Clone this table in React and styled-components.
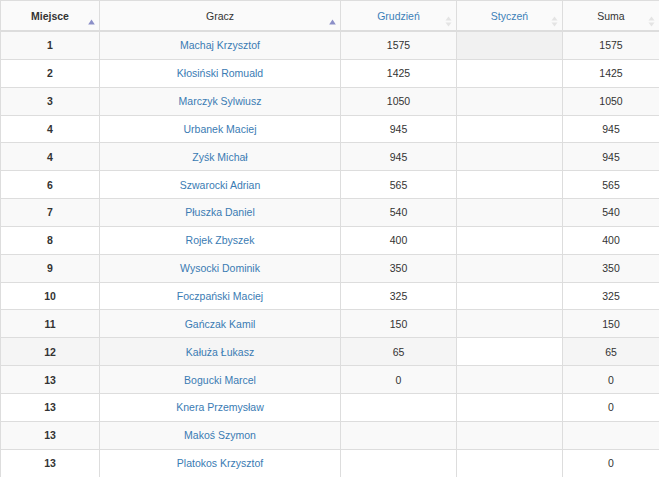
import styled, { createGlobalStyle } from "styled-components";

const GlobalStyle = createGlobalStyle`
  body {
    margin: 0;
    background: #ffffff;
    font-family: "Liberation Sans", Arial, sans-serif;
  }
`;

const Table = styled.table`
  width: 659px;
  border-collapse: collapse;
  table-layout: fixed;
  font-family: "Liberation Sans", Arial, sans-serif;
  font-size: 10.5px;
  color: #333333;
`;

const HeadCell = styled.th`
  position: relative;
  height: 28px;
  padding: 1px 8px 0;
  border: 1px solid #dddddd;
  border-bottom: 2px solid #dddddd;
  background: #fafafa;
  text-align: center;
  font-weight: ${(p) => (p.$bold ? "bold" : "normal")};
  color: ${(p) => (p.$link ? "#3c7fb8" : "#333333")};
`;

const SortIcon = styled.svg`
  position: absolute;
  right: ${(p) => p.$right}px;
  bottom: ${(p) => p.$bottom}px;
`;

const Cell = styled.td`
  height: 26.85px;
  padding: 0 8px;
  border: 1px solid #dddddd;
  text-align: center;
  font-weight: ${(p) => (p.$bold ? "bold" : "normal")};
  background: ${(p) => p.$bg};
`;

const PlayerLink = styled.a`
  color: #3a7bb3;
  text-decoration: none;
`;

function AscIcon() {
  return (
    <SortIcon $right={4} $bottom={5} width="7" height="6" viewBox="0 0 7 6">
      <path d="M3.5 0.5 L6.8 5.5 L0.2 5.5 Z" fill="#8b8fc8" />
    </SortIcon>
  );
}

function BothIcon() {
  return (
    <SortIcon $right={4} $bottom={3} width="7" height="11" viewBox="0 0 7 11">
      <path d="M3.5 0.5 L6.5 4.5 L0.5 4.5 Z" fill="#e4e4e4" />
      <path d="M3.5 10.5 L6.5 6.5 L0.5 6.5 Z" fill="#e4e4e4" />
    </SortIcon>
  );
}

const rows = [
  ["1", "Machaj Krzysztof", "1575", "", "1575"],
  ["2", "Kłosiński Romuald", "1425", "", "1425"],
  ["3", "Marczyk Sylwiusz", "1050", "", "1050"],
  ["4", "Urbanek Maciej", "945", "", "945"],
  ["4", "Zyśk Michał", "945", "", "945"],
  ["6", "Szwarocki Adrian", "565", "", "565"],
  ["7", "Płuszka Daniel", "540", "", "540"],
  ["8", "Rojek Zbyszek", "400", "", "400"],
  ["9", "Wysocki Dominik", "350", "", "350"],
  ["10", "Foczpański Maciej", "325", "", "325"],
  ["11", "Gańczak Kamil", "150", "", "150"],
  ["12", "Kałuża Łukasz", "65", "", "65"],
  ["13", "Bogucki Marcel", "0", "", "0"],
  ["13", "Knera Przemysław", "", "", "0"],
  ["13", "Makoś Szymon", "", "", ""],
  ["13", "Platokos Krzysztof", "", "", "0"],
];

function cellBg(rowIndex, colIndex) {
  if (rowIndex === 0 && colIndex === 3) return "#f1f1f1";
  if (rowIndex === 11) return colIndex === 3 ? "#ffffff" : "#f5f5f5";
  return rowIndex % 2 === 0 ? "#f9f9f9" : "#ffffff";
}

export default function App() {
  return (
    <>
      <GlobalStyle />
      <Table>
        <colgroup>
          <col style={{ width: 99 }} />
          <col style={{ width: 241 }} />
          <col style={{ width: 116 }} />
          <col style={{ width: 106 }} />
          <col style={{ width: 97 }} />
        </colgroup>
        <thead>
          <tr>
            <HeadCell $bold>
              Miejsce
              <AscIcon />
            </HeadCell>
            <HeadCell>
              Gracz
              <AscIcon />
            </HeadCell>
            <HeadCell $link>
              Grudzień
              <BothIcon />
            </HeadCell>
            <HeadCell $link>
              Styczeń
              <BothIcon />
            </HeadCell>
            <HeadCell>
              Suma
              <BothIcon />
            </HeadCell>
          </tr>
        </thead>
        <tbody>
          {rows.map((r, i) => (
            <tr key={i}>
              <Cell $bold $bg={cellBg(i, 0)}>{r[0]}</Cell>
              <Cell $bg={cellBg(i, 1)}>
                <PlayerLink href="#">{r[1]}</PlayerLink>
              </Cell>
              <Cell $bg={cellBg(i, 2)}>{r[2]}</Cell>
              <Cell $bg={cellBg(i, 3)}>{r[3]}</Cell>
              <Cell $bg={cellBg(i, 4)}>{r[4]}</Cell>
            </tr>
          ))}
        </tbody>
      </Table>
    </>
  );
}
